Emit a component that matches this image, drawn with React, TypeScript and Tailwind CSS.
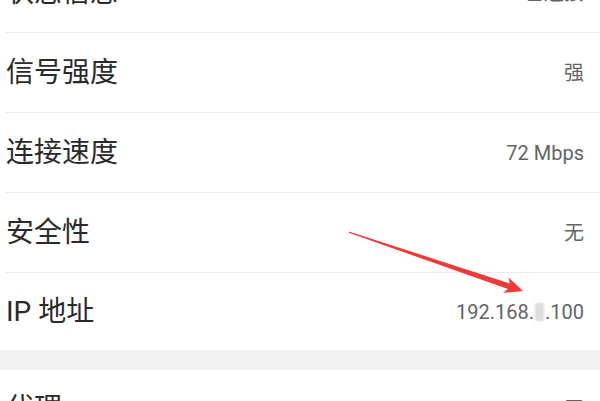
import React from "react";

const rows = [
  { label: "状态信息", value: "已连接" },
  { label: "信号强度", value: "强" },
  { label: "连接速度", value: "72 Mbps" },
  { label: "安全性", value: "无" },
];

const font = { fontFamily: '"Roboto", "Noto Sans CJK SC", sans-serif' };

const Row = ({
  label,
  value,
  className,
}: {
  label: string;
  value: React.ReactNode;
  className: string;
}) => (
  <div className={`ml-[6px] flex items-center justify-between ${className}`}>
    <span className="text-[28px] leading-none text-[#2a2a2a]">{label}</span>
    <span className="pr-[16px] text-[20px] leading-none text-[#636363]">{value}</span>
  </div>
);

export default function App() {
  return (
    <div className="relative h-[401px] w-[600px] overflow-hidden bg-white" style={font}>
      <div className="mt-[-47px]">
        {rows.map((r) => (
          <Row
            key={r.label}
            label={r.label}
            value={r.value}
            className="h-[80px] border-b border-[#e9e9e9]"
          />
        ))}
        <Row
          label="IP 地址"
          value={
            <>
              192.168.
              <span className="mx-[1px] inline-block h-[18px] w-[9px] translate-y-[2px] rounded-[2px] bg-[#dcdcdc] blur-[1px]" />
              .100
            </>
          }
          className="h-[77px]"
        />
        <div className="h-[20px] bg-[#f1f1f1]" />
        <Row label="代理" value="无" className="h-[78px]" />
      </div>

      {/* red annotation arrow */}
      <svg className="absolute left-0 top-0" width="600" height="401" viewBox="0 0 600 401">
        <polygon
          points="349,231.5 509.8,283.4 508.6,277.6 523,291 503.4,292.8 507.9,289 349,232.8"
          fill="#ef3a37"
        />
      </svg>
    </div>
  );
}
